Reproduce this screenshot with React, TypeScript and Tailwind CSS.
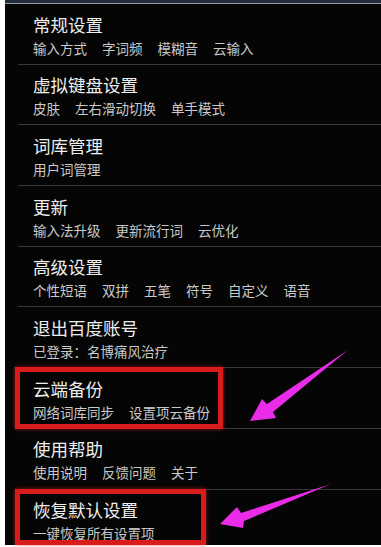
const rows = [
  { title: "常规设置", items: ["输入方式", "字词频", "模糊音", "云输入"] },
  { title: "虚拟键盘设置", items: ["皮肤", "左右滑动切换", "单手模式"] },
  { title: "词库管理", items: ["用户词管理"] },
  { title: "更新", items: ["输入法升级", "更新流行词", "云优化"] },
  { title: "高级设置", items: ["个性短语", "双拼", "五笔", "符号", "自定义", "语音"] },
  { title: "退出百度账号", items: ["已登录：名博痛风治疗"] },
  { title: "云端备份", items: ["网络词库同步", "设置项云备份"] },
  { title: "使用帮助", items: ["使用说明", "反馈问题", "关于"] },
  { title: "恢复默认设置", items: ["一键恢复所有设置项"] },
];

function SettingRow({ title, items, last }: { title: string; items: string[]; last: boolean }) {
  return (
    <>
      <div className="h-[59.7px] shrink-0 pl-[28px] pt-[11.5px]">
        <div className="text-[17.5px] leading-[18px] text-[#eeeeee]">{title}</div>
        <div className="mt-[7px] flex gap-[15px] text-[13.5px] leading-[14px] text-[#c9c9c9]">
          {items.map((item) => (
            <span key={item}>{item}</span>
          ))}
        </div>
      </div>
      {!last && <div className="ml-[13px] h-px shrink-0 bg-[#383838]" />}
    </>
  );
}

export default function App() {
  return (
    <div className="relative flex h-[547px] w-[381px] overflow-hidden bg-white font-['Noto_Sans_CJK_SC','Noto_Sans',sans-serif]">
      <div className="mb-[2px] ml-[5px] flex flex-1 flex-col overflow-hidden bg-[#050505]">
        {/* status bar edge */}
        <div className="h-[3px] shrink-0 bg-[#262d3a]" />
        <div className="h-px shrink-0 bg-[#8c9cb0]" />
        {rows.map((row, i) => (
          <SettingRow key={row.title} title={row.title} items={row.items} last={i === rows.length - 1} />
        ))}
      </div>

      {/* annotations */}
      <div className="absolute left-[15px] top-[367px] h-[62px] w-[208px] border-[5px] border-[#d81c1c] shadow-[0_0_4px_rgba(255,40,40,0.6)]" />
      <div className="absolute left-[15px] top-[489px] h-[56px] w-[191px] border-[5px] border-[#d81c1c] shadow-[0_0_4px_rgba(255,40,40,0.6)]" />
      <svg className="absolute inset-0" width="381" height="547" viewBox="0 0 381 547">
        <polygon points="348,350 267,404 262,399 250,421 276,418 273,412" fill="#ea2ce8" />
        <polygon points="331,484 241,513 237,507 220,524 243,528 244,521" fill="#ea2ce8" />
      </svg>
    </div>
  );
}
